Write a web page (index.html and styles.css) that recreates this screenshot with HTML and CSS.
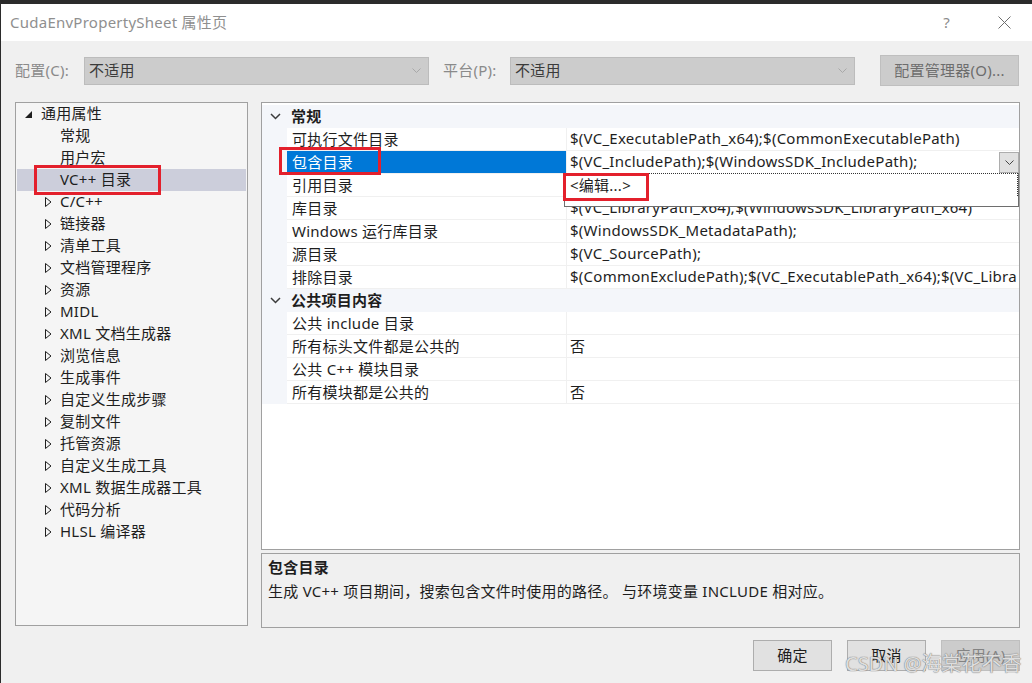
FILE: index.html
```html
<!DOCTYPE html>
<html lang="zh-CN">
<head>
<meta charset="utf-8">
<title>CudaEnvPropertySheet 属性页</title>
<link rel="stylesheet" href="styles.css">
</head>
<body>
<div class="window">
  <div class="titlebar">
    <span class="title">CudaEnvPropertySheet 属性页</span>
    <span class="help">?</span>
    <svg class="close" width="13" height="13" viewBox="0 0 13 13"><path d="M0.5 0.5 L12.5 12.5 M12.5 0.5 L0.5 12.5" stroke="#6e6e6e" stroke-width="1" fill="none"/></svg>
  </div>
  <div class="body">
    <div class="config-row">
      <span class="lbl lbl-config">配置(C):</span>
      <div class="combo"><span>不适用</span><svg class="combo-chev" width="9" height="5" viewBox="0 0 9 5"><path d="M0.5 0.5 L4.5 4.5 L8.5 0.5" stroke="#a8a8a8" fill="none"/></svg></div>
      <span class="lbl lbl-platform">平台(P):</span>
      <div class="combo"><span>不适用</span><svg class="combo-chev" width="9" height="5" viewBox="0 0 9 5"><path d="M0.5 0.5 L4.5 4.5 L8.5 0.5" stroke="#a8a8a8" fill="none"/></svg></div>
      <div class="btn btn-disabled btn-manager">配置管理器(O)...</div>
    </div>
    <div class="main">
      <div class="tree">
        <div class="ti root"><span class="arr"><svg width="7" height="7" viewBox="0 0 7 7"><path d="M7 0 L7 7 L0 7 Z" fill="#1e1e1e"/></svg></span>通用属性</div>
        <div class="ti leaf">常规</div>
        <div class="ti leaf">用户宏</div>
        <div class="ti leaf selected">VC++ 目录</div>
        <div class="ti child"><span class="arr"><svg width="7" height="10" viewBox="0 0 7 10"><path d="M0.5 0.5 L6 5 L0.5 9.5 Z" fill="none" stroke="#1e1e1e"/></svg></span>C/C++</div>
        <div class="ti child"><span class="arr"><svg width="7" height="10" viewBox="0 0 7 10"><path d="M0.5 0.5 L6 5 L0.5 9.5 Z" fill="none" stroke="#1e1e1e"/></svg></span>链接器</div>
        <div class="ti child"><span class="arr"><svg width="7" height="10" viewBox="0 0 7 10"><path d="M0.5 0.5 L6 5 L0.5 9.5 Z" fill="none" stroke="#1e1e1e"/></svg></span>清单工具</div>
        <div class="ti child"><span class="arr"><svg width="7" height="10" viewBox="0 0 7 10"><path d="M0.5 0.5 L6 5 L0.5 9.5 Z" fill="none" stroke="#1e1e1e"/></svg></span>文档管理程序</div>
        <div class="ti child"><span class="arr"><svg width="7" height="10" viewBox="0 0 7 10"><path d="M0.5 0.5 L6 5 L0.5 9.5 Z" fill="none" stroke="#1e1e1e"/></svg></span>资源</div>
        <div class="ti child"><span class="arr"><svg width="7" height="10" viewBox="0 0 7 10"><path d="M0.5 0.5 L6 5 L0.5 9.5 Z" fill="none" stroke="#1e1e1e"/></svg></span>MIDL</div>
        <div class="ti child"><span class="arr"><svg width="7" height="10" viewBox="0 0 7 10"><path d="M0.5 0.5 L6 5 L0.5 9.5 Z" fill="none" stroke="#1e1e1e"/></svg></span>XML 文档生成器</div>
        <div class="ti child"><span class="arr"><svg width="7" height="10" viewBox="0 0 7 10"><path d="M0.5 0.5 L6 5 L0.5 9.5 Z" fill="none" stroke="#1e1e1e"/></svg></span>浏览信息</div>
        <div class="ti child"><span class="arr"><svg width="7" height="10" viewBox="0 0 7 10"><path d="M0.5 0.5 L6 5 L0.5 9.5 Z" fill="none" stroke="#1e1e1e"/></svg></span>生成事件</div>
        <div class="ti child"><span class="arr"><svg width="7" height="10" viewBox="0 0 7 10"><path d="M0.5 0.5 L6 5 L0.5 9.5 Z" fill="none" stroke="#1e1e1e"/></svg></span>自定义生成步骤</div>
        <div class="ti child"><span class="arr"><svg width="7" height="10" viewBox="0 0 7 10"><path d="M0.5 0.5 L6 5 L0.5 9.5 Z" fill="none" stroke="#1e1e1e"/></svg></span>复制文件</div>
        <div class="ti child"><span class="arr"><svg width="7" height="10" viewBox="0 0 7 10"><path d="M0.5 0.5 L6 5 L0.5 9.5 Z" fill="none" stroke="#1e1e1e"/></svg></span>托管资源</div>
        <div class="ti child"><span class="arr"><svg width="7" height="10" viewBox="0 0 7 10"><path d="M0.5 0.5 L6 5 L0.5 9.5 Z" fill="none" stroke="#1e1e1e"/></svg></span>自定义生成工具</div>
        <div class="ti child"><span class="arr"><svg width="7" height="10" viewBox="0 0 7 10"><path d="M0.5 0.5 L6 5 L0.5 9.5 Z" fill="none" stroke="#1e1e1e"/></svg></span>XML 数据生成器工具</div>
        <div class="ti child"><span class="arr"><svg width="7" height="10" viewBox="0 0 7 10"><path d="M0.5 0.5 L6 5 L0.5 9.5 Z" fill="none" stroke="#1e1e1e"/></svg></span>代码分析</div>
        <div class="ti child"><span class="arr"><svg width="7" height="10" viewBox="0 0 7 10"><path d="M0.5 0.5 L6 5 L0.5 9.5 Z" fill="none" stroke="#1e1e1e"/></svg></span>HLSL 编译器</div>
      </div>
      <div class="right">
        <div class="grid">
          <div class="cat"><span class="chev"><svg width="11" height="7" viewBox="0 0 11 7"><path d="M1 1 L5.5 5.5 L10 1" stroke="#3c3c3c" stroke-width="1.5" fill="none"/></svg></span><span class="cat-name">常规</span></div>
          <div class="row"><div class="gut"></div><div class="name">可执行文件目录</div><div class="val"><span class="vt">$(VC_ExecutablePath_x64);$(CommonExecutablePath)</span></div></div>
          <div class="row sel"><div class="gut"></div><div class="name">包含目录</div><div class="val"><span class="vt">$(VC_IncludePath);$(WindowsSDK_IncludePath);</span><span class="ddbtn"><svg width="9" height="5" viewBox="0 0 9 5"><path d="M0.5 0.5 L4.5 4.5 L8.5 0.5" stroke="#444" fill="none"/></svg></span></div></div>
          <div class="row"><div class="gut"></div><div class="name">引用目录</div><div class="val"><span class="vt"></span></div></div>
          <div class="row"><div class="gut"></div><div class="name">库目录</div><div class="val"><span class="vt">$(VC_LibraryPath_x64);$(WindowsSDK_LibraryPath_x64)</span></div></div>
          <div class="row"><div class="gut"></div><div class="name">Windows 运行库目录</div><div class="val"><span class="vt">$(WindowsSDK_MetadataPath);</span></div></div>
          <div class="row"><div class="gut"></div><div class="name">源目录</div><div class="val"><span class="vt">$(VC_SourcePath);</span></div></div>
          <div class="row"><div class="gut"></div><div class="name">排除目录</div><div class="val"><span class="vt">$(CommonExcludePath);$(VC_ExecutablePath_x64);$(VC_Libra</span></div></div>
          <div class="cat"><span class="chev"><svg width="11" height="7" viewBox="0 0 11 7"><path d="M1 1 L5.5 5.5 L10 1" stroke="#3c3c3c" stroke-width="1.5" fill="none"/></svg></span><span class="cat-name">公共项目内容</span></div>
          <div class="row"><div class="gut"></div><div class="name">公共 include 目录</div><div class="val"><span class="vt"></span></div></div>
          <div class="row"><div class="gut"></div><div class="name">所有标头文件都是公共的</div><div class="val"><span class="vt">否</span></div></div>
          <div class="row"><div class="gut"></div><div class="name">公共 C++ 模块目录</div><div class="val"><span class="vt"></span></div></div>
          <div class="row"><div class="gut"></div><div class="name">所有模块都是公共的</div><div class="val"><span class="vt">否</span></div></div>
          <div class="popup"><div class="popup-item">&lt;编辑...&gt;</div></div>
        </div>
        <div class="desc">
          <div class="desc-title">包含目录</div>
          <div class="desc-text">生成 VC++ 项目期间，搜索包含文件时使用的路径。 与环境变量 INCLUDE 相对应。</div>
        </div>
      </div>
    </div>
    <div class="buttons">
      <div class="btn">确定</div>
      <div class="btn">取消</div>
      <div class="btn btn-disabled">应用(A)</div>
    </div>
  </div>
</div>
<div class="mark mark-tree"></div>
<div class="mark mark-name"></div>
<div class="mark mark-edit"></div>
<div class="watermark">CSDN @海棠花不香</div>
</body>
</html>
```

FILE: styles.css
```css
* { box-sizing: border-box; }
html, body { margin: 0; padding: 0; }
body {
  width: 1032px;
  height: 683px;
  background: #2b2b2b;
  position: relative;
  overflow: hidden;
  font-family: "Noto Sans", "Noto Sans CJK SC", sans-serif;
  font-size: 15px;
  letter-spacing: 0.25px;
  color: #1e1e1e;
}
.window {
  margin: 4px 0 0 1px;
  height: 679px;
  background: #f0f0f0;
  display: flex;
  flex-direction: column;
}
.titlebar {
  height: 37px;
  background: #ffffff;
  display: flex;
  align-items: center;
  padding-left: 9px;
  padding-right: 21px;
  padding-bottom: 2px;
}
.title { color: #8f8f8f; flex: 1; }
.help { color: #8a8a8a; margin-right: 48px; font-size: 15px; }
.close { display: block; margin-top: 2px; }

.body { padding: 0 12px 0 14px; display: flex; flex-direction: column; }
.config-row {
  margin-top: 14px;
  height: 31px;
  display: flex;
  align-items: center;
}
.lbl { color: #8a8a8a; padding-bottom: 2px; }
.lbl-config { width: 69px; }
.lbl-platform { width: 67px; margin-left: 14px; }
.combo {
  width: 345px;
  height: 28px;
  background: #cccccc;
  border: 1px solid #bcbcbc;
  display: flex;
  align-items: center;
  padding: 0 7px 2px 4px;
  color: #3a3a3a;
}
.combo span { flex: 1; }
.combo-chev { display: block; margin-top: 2px; }
.btn {
  width: 79px;
  height: 31px;
  background: #e1e1e1;
  border: 1px solid #adadad;
  display: flex;
  align-items: center;
  justify-content: center;
  padding-bottom: 2px;
  color: #1e1e1e;
}
.btn-disabled { background: #cccccc; border-color: #bfbfbf; color: #838383; }
.btn-manager { width: 139px; margin-left: 25px; color: #6d6d6d; }

.main {
  margin-top: 16px;
  display: flex;
  height: 526px;
}
.tree {
  width: 233px;
  height: 524px;
  background: #f5f5f5;
  border: 1px solid #a0a0a0;
}
.ti {
  height: 22px;
  display: flex;
  align-items: center;
  margin: 0 1px;
  padding-bottom: 3px;
  white-space: nowrap;
}
.ti .arr { display: flex; align-items: center; margin-top: 3px; }
.ti.root { padding-left: 8px; }
.ti.root .arr { width: 16px; }
.ti.child { padding-left: 28px; }
.ti.child .arr { width: 15px; }
.ti.leaf { padding-left: 43px; }
.ti.selected { background: #cccedb; }

.right {
  margin-left: 13px;
  width: 759px;
  display: flex;
  flex-direction: column;
}
.grid {
  position: relative;
  height: 448px;
  background: #ffffff;
  border: 1px solid #a0a0a0;
  padding-top: 2px;
  overflow: hidden;
}
.cat {
  height: 23px;
  background: #f4f6fa;
  display: flex;
  align-items: center;
  padding-bottom: 3px;
}
.chev { width: 29px; padding-left: 8px; display: flex; align-items: center; margin-top: 2px; }
.cat-name { font-weight: bold; }
.row {
  height: 23px;
  display: grid;
  grid-template-columns: 25px 280px 1fr;
  border-bottom: 1px solid #f0f0f0;
}
.gut { background: #f4f6fa; margin-bottom: -1px; }
.name {
  border-right: 1px solid #f0f0f0;
  padding-left: 5px;
  padding-bottom: 2px;
  display: flex;
  align-items: center;
  white-space: nowrap;
  overflow: hidden;
}
.val {
  display: flex;
  align-items: center;
  padding-left: 3px;
  overflow: hidden;
  white-space: nowrap;
}
.vt { flex: 1; overflow: hidden; padding-bottom: 2px; }
.row.sel .name { background: #0078d7; color: #ffffff; }
.ddbtn {
  width: 20px;
  height: 21px;
  background: #e1e1e1;
  border: 1px solid #adadad;
  display: flex;
  align-items: center;
  justify-content: center;
  flex: none;
}
.popup {
  position: absolute;
  left: 302px;
  top: 70px;
  width: 455px;
  height: 34px;
  background: #ffffff;
  border: 1px solid #6e6e6e;
  border-top: none;
}
.popup-item {
  height: 23px;
  padding-left: 5px;
  padding-bottom: 2px;
  display: flex;
  align-items: center;
  border-top: 1px dotted #333333;
  border-right: 1px dotted #333333;
}
.desc {
  margin-top: 3px;
  height: 75px;
  border: 1px solid #a0a0a0;
  padding: 1px 0 0 6px;
}
.desc-title { font-weight: bold; height: 24px; line-height: 24px; }
.desc-text { height: 24px; line-height: 24px; }

.buttons {
  margin-top: 12px;
  display: flex;
  justify-content: flex-end;
  gap: 15px;
}

.mark { position: absolute; border: 3px solid #e3202c; }
.mark-tree { left: 34px; top: 165px; width: 127px; height: 30px; }
.mark-name { left: 279px; top: 147px; width: 102px; height: 28px; }
.mark-edit { left: 563px; top: 173px; width: 86px; height: 28px; }

.watermark {
  position: absolute;
  left: 845px;
  top: 648px;
  font-size: 20px;
  letter-spacing: 0;
  color: rgba(255, 255, 255, 0.75);
  text-shadow: 0 0 1px #7a7a7a, 0 0 1px #7a7a7a;
  white-space: nowrap;
}
```
